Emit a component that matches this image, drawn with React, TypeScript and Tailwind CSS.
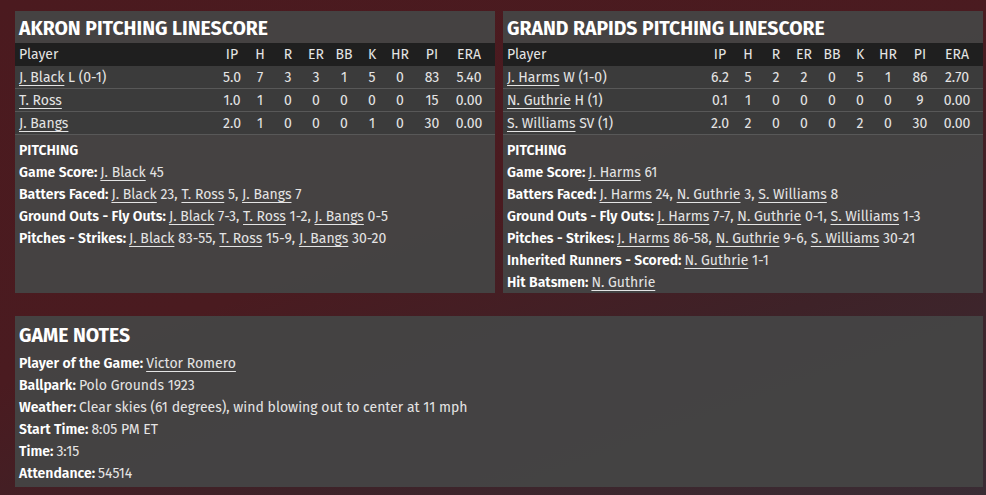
import React from 'react';

type Pitcher = {
  name: string;
  note?: string;
  stats: string[];
};

const cols = ['IP', 'H', 'R', 'ER', 'BB', 'K', 'HR', 'PI', 'ERA'];

const akron: Pitcher[] = [
  { name: 'J. Black', note: 'L (0-1)', stats: ['5.0', '7', '3', '3', '1', '5', '0', '83', '5.40'] },
  { name: 'T. Ross', stats: ['1.0', '1', '0', '0', '0', '0', '0', '15', '0.00'] },
  { name: 'J. Bangs', stats: ['2.0', '1', '0', '0', '0', '1', '0', '30', '0.00'] },
];

const grandRapids: Pitcher[] = [
  { name: 'J. Harms', note: 'W (1-0)', stats: ['6.2', '5', '2', '2', '0', '5', '1', '86', '2.70'] },
  { name: 'N. Guthrie', note: 'H (1)', stats: ['0.1', '1', '0', '0', '0', '0', '0', '9', '0.00'] },
  { name: 'S. Williams', note: 'SV (1)', stats: ['2.0', '2', '0', '0', '0', '2', '0', '30', '0.00'] },
];

// each item: [linked name, trailing text]
type Part = [string, string];

const Link: React.FC<{ children: React.ReactNode }> = ({ children }) => (
  <span className="underline underline-offset-[3px] decoration-1">{children}</span>
);

const Line: React.FC<{ label: string; parts?: Part[]; text?: string }> = ({ label, parts, text }) => (
  <div className="h-[22px] leading-[22px] whitespace-nowrap">
    <span className="font-semibold text-white">{label}</span>
    <span className="inline-block w-[3px]" />
    {parts &&
      parts.map(([n, t], i) => (
        <React.Fragment key={i}>
          <Link>{n}</Link>
          {t}
          {i < parts.length - 1 ? ', ' : ''}
        </React.Fragment>
      ))}
    {text}
  </div>
);

const gridCols = 'grid grid-cols-[1fr_28px_28px_28px_28px_28px_28px_28px_36px_38px] pr-[7px] pl-[4px]';

const Linescore: React.FC<{ title: string; rows: Pitcher[]; children: React.ReactNode }> = ({ title, rows, children }) => (
  <div className="bg-[#454545]/95 h-[282px]">
    <div className="h-[32px] flex items-center pt-[3px] px-[4px]">
      <h2 className="text-[19.4px] font-bold text-white">{title}</h2>
    </div>
    <div className={`${gridCols} h-[23px] items-center bg-[#1f1f1f] text-[#e4e4e4]`}>
      <div>Player</div>
      {cols.map(c => (
        <div key={c} className="text-center">{c}</div>
      ))}
    </div>
    {rows.map(r => (
      <div key={r.name} className={`${gridCols} h-[23px] items-center bg-[#3b3b3b] border-b border-[#585858] text-[#e4e4e4]`}>
        <div className="whitespace-nowrap">
          <Link>{r.name}</Link>
          {r.note ? ` ${r.note}` : ''}
        </div>
        {r.stats.map((s, i) => (
          <div key={i} className="text-center">{s}</div>
        ))}
      </div>
    ))}
    <div className="pt-[5px] px-[4px] text-[#e4e4e4]">
      <div className="h-[22px] leading-[22px] font-semibold text-white">PITCHING</div>
      {children}
    </div>
  </div>
);

const App: React.FC = () => {
  return (
    <div
      className="w-[986px] h-[495px] overflow-hidden pt-[11px] pl-[15px] text-[14px] bg-[linear-gradient(160deg,#4b1a1f_0%,#4a1b20_45%,#3e2228_70%,#3a2c34_100%)]"
      style={{ fontFamily: '"Fira Sans", "Open Sans", "Noto Sans", sans-serif' }}
    >
      <div className="grid grid-cols-[480px_480px] gap-x-[8px]">
        <Linescore title="AKRON PITCHING LINESCORE" rows={akron}>
          <Line label="Game Score:" parts={[['J. Black', ' 45']]} />
          <Line label="Batters Faced:" parts={[['J. Black', ' 23'], ['T. Ross', ' 5'], ['J. Bangs', ' 7']]} />
          <Line label="Ground Outs - Fly Outs:" parts={[['J. Black', ' 7-3'], ['T. Ross', ' 1-2'], ['J. Bangs', ' 0-5']]} />
          <Line label="Pitches - Strikes:" parts={[['J. Black', ' 83-55'], ['T. Ross', ' 15-9'], ['J. Bangs', ' 30-20']]} />
        </Linescore>
        <Linescore title="GRAND RAPIDS PITCHING LINESCORE" rows={grandRapids}>
          <Line label="Game Score:" parts={[['J. Harms', ' 61']]} />
          <Line label="Batters Faced:" parts={[['J. Harms', ' 24'], ['N. Guthrie', ' 3'], ['S. Williams', ' 8']]} />
          <Line label="Ground Outs - Fly Outs:" parts={[['J. Harms', ' 7-7'], ['N. Guthrie', ' 0-1'], ['S. Williams', ' 1-3']]} />
          <Line label="Pitches - Strikes:" parts={[['J. Harms', ' 86-58'], ['N. Guthrie', ' 9-6'], ['S. Williams', ' 30-21']]} />
          <Line label="Inherited Runners - Scored:" parts={[['N. Guthrie', ' 1-1']]} />
          <Line label="Hit Batsmen:" parts={[['N. Guthrie', '']]} />
        </Linescore>
      </div>

      <div className="mt-[23px] w-[968px] h-[171px] bg-[#454545]/95 px-[4px] text-[#e4e4e4]">
        <div className="h-[37px] flex items-center pt-[3px]">
          <h2 className="text-[19.4px] font-bold text-white">GAME NOTES</h2>
        </div>
        <Line label="Player of the Game:" parts={[['Victor Romero', '']]} />
        <Line label="Ballpark:" text="Polo Grounds 1923" />
        <Line label="Weather:" text="Clear skies (61 degrees), wind blowing out to center at 11 mph" />
        <Line label="Start Time:" text="8:05 PM ET" />
        <Line label="Time:" text="3:15" />
        <Line label="Attendance:" text="54514" />
      </div>
    </div>
  );
};

export default App;
